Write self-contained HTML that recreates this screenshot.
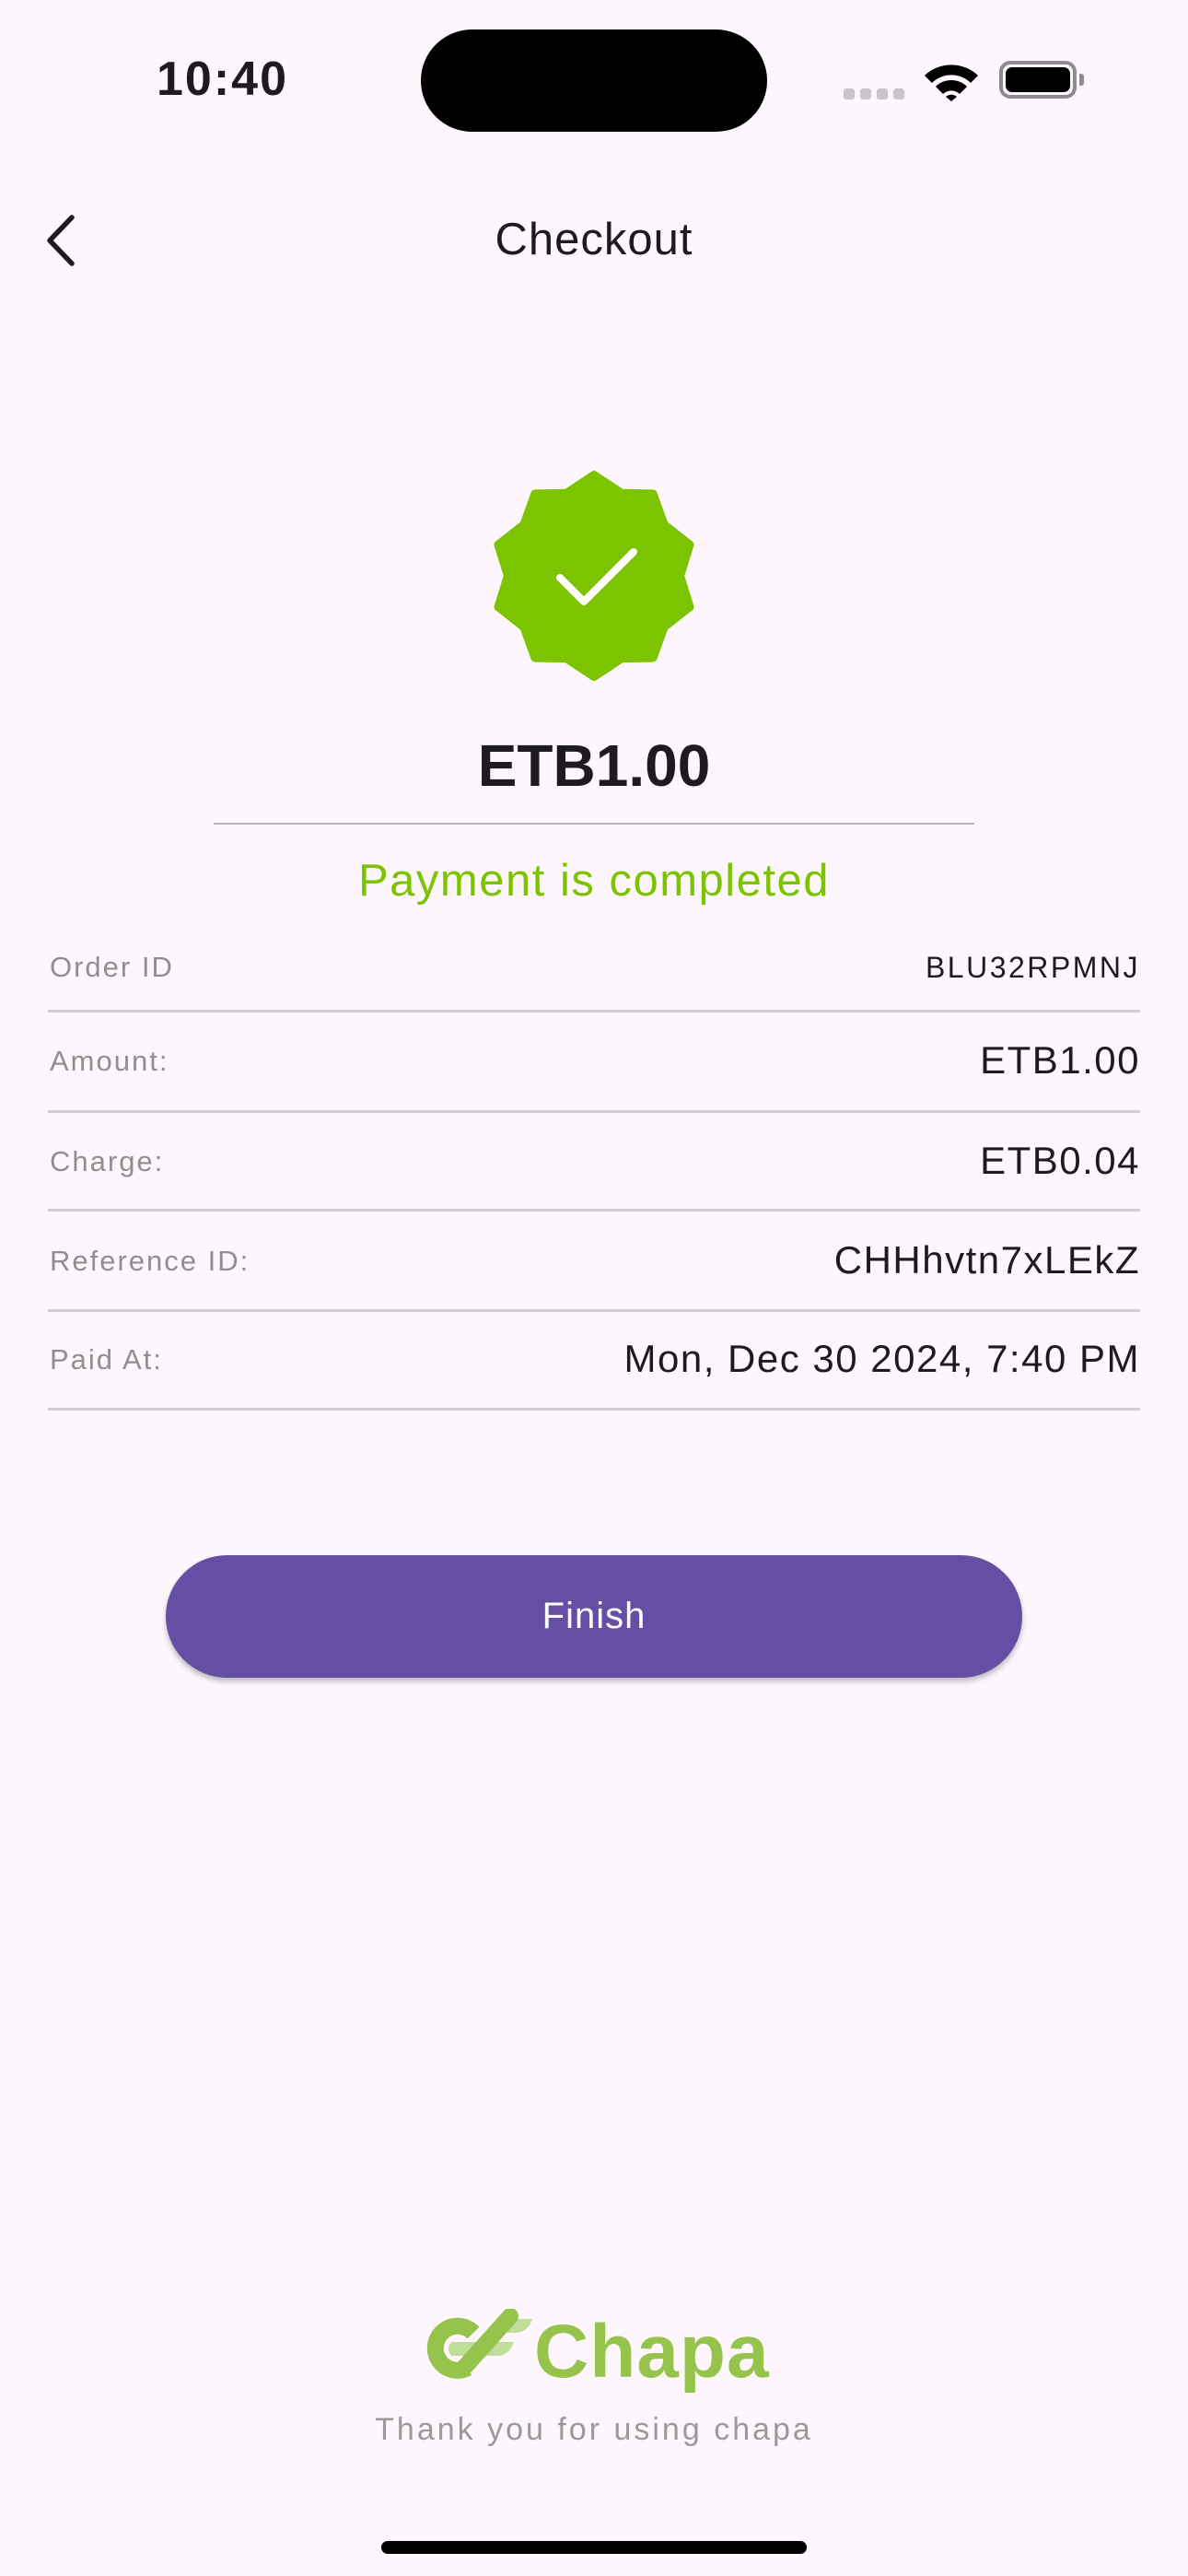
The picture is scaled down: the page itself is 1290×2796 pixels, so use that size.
<!DOCTYPE html>
<html><head><meta charset="utf-8"><style>
*{margin:0;padding:0;box-sizing:border-box}
body{width:1290px;height:2796px;background:#fdf7fd;position:relative;overflow:hidden;font-family:"Liberation Sans",sans-serif;color:#1d1b20}
.a{position:absolute}
.lbl{position:absolute;left:54px;font-size:31px;color:#8f8f8f;letter-spacing:2px}
.val{position:absolute;right:52px;font-size:42px;color:#1d1b20;letter-spacing:1.5px}
.ln{position:absolute;left:52px;width:1186px;height:3px;background:#cfcdd2}
</style></head><body>
<div class="a" style="left:170px;top:56px;font-size:52px;font-weight:bold;letter-spacing:2px">10:40</div>
<div class="a" style="left:457px;top:32px;width:376px;height:111px;border-radius:56px;background:#000"></div>
<div class="a" style="left:916px;top:96px;width:12px;height:12px;border-radius:3px;background:#c9c6ca"></div>
<div class="a" style="left:934px;top:96px;width:12px;height:12px;border-radius:3px;background:#c9c6ca"></div>
<div class="a" style="left:952px;top:96px;width:12px;height:12px;border-radius:3px;background:#c9c6ca"></div>
<div class="a" style="left:970px;top:96px;width:12px;height:12px;border-radius:3px;background:#c9c6ca"></div>
<svg class="a" style="left:1000px;top:62px" width="66" height="48" viewBox="0 0 66 48">
<path d="M4 20 A42 42 0 0 1 62 20 L54 28 A30 30 0 0 0 12 28 Z" fill="#000"/>
<path d="M16 32 A24 24 0 0 1 50 32 L42 40 A13 13 0 0 0 24 40 Z" fill="#000"/>
<path d="M27 43 A9 9 0 0 1 39 43 L33 48 Z" fill="#000"/></svg>
<div class="a" style="left:1085px;top:66px;width:84px;height:41px;border:4px solid #8e8b90;border-radius:12px"></div>
<div class="a" style="left:1092px;top:73px;width:70px;height:27px;border-radius:7px;background:#000"></div>
<div class="a" style="left:1172px;top:80px;width:5px;height:13px;border-radius:0 3px 3px 0;background:#8e8b90"></div>
<svg class="a" style="left:44px;top:230px" width="46" height="62" viewBox="0 0 46 62"><path d="M34 6 L10 31 L34 56" fill="none" stroke="#1d1b20" stroke-width="5.5" stroke-linecap="round" stroke-linejoin="round"/></svg>
<div class="a" style="left:0;width:1290px;top:232px;text-align:center;font-size:49px;letter-spacing:1px">Checkout</div>
<svg class="a" style="left:0;top:0" width="1290" height="800">
<polygon points="645,516 674.7,535.7 708.8,536.4 720.7,569.6 748.5,591.4 738,625 748.5,658.6 720.7,680.4 708.8,713.6 674.7,714.3 645,734 615.3,714.3 581.2,713.6 569.3,680.4 541.5,658.6 552,625 541.5,591.4 569.3,569.6 581.2,536.4 615.3,535.7" fill="#7dc400" stroke="#7dc400" stroke-width="10" stroke-linejoin="round"/>
<path d="M608 627 L634 653 L688 599" fill="none" stroke="#fff" stroke-width="8" stroke-linecap="round" stroke-linejoin="round"/>
</svg>
<div class="a" style="left:0;width:1290px;top:794px;text-align:center;font-size:64px;font-weight:bold">ETB1.00</div>
<div class="a" style="left:232px;top:893px;width:826px;height:2px;background:#b9b7bb"></div>
<div class="a" style="left:0;width:1290px;top:928px;text-align:center;font-size:49px;color:#7dc400;letter-spacing:1.5px">Payment is completed</div>
<div class="lbl" style="top:1032px">Order ID</div><div class="val" style="top:1032px;font-size:32px;letter-spacing:2.5px">BLU32RPMNJ</div>
<div class="ln" style="top:1096px"></div>
<div class="lbl" style="top:1134px">Amount:</div><div class="val" style="top:1127px">ETB1.00</div>
<div class="ln" style="top:1205px"></div>
<div class="lbl" style="top:1243px">Charge:</div><div class="val" style="top:1236px">ETB0.04</div>
<div class="ln" style="top:1312px"></div>
<div class="lbl" style="top:1351px">Reference ID:</div><div class="val" style="top:1344px">CHHhvtn7xLEkZ</div>
<div class="ln" style="top:1421px"></div>
<div class="lbl" style="top:1458px">Paid At:</div><div class="val" style="top:1451px">Mon, Dec 30 2024, 7:40 PM</div>
<div class="ln" style="top:1528px"></div>
<div class="a" style="left:180px;top:1688px;width:930px;height:133px;border-radius:67px;background:#654ea3;box-shadow:0 4px 6px rgba(0,0,0,.25);color:#fff;font-size:40px;text-align:center;line-height:133px;letter-spacing:1px">Finish</div>
<svg class="a" style="left:462px;top:2506px" width="130" height="84" viewBox="0 0 130 84">
<path d="M80 11 L116 11 Q112 24 100 26 L70 26 Z" fill="#c1dd9a"/>
<path d="M28 36 L96 36 Q92 49 80 51 L28 51 Q22 44 28 36 Z" fill="#c1dd9a"/>
<path d="M52 26 A24 24 0 1 0 46 64" fill="none" stroke="#95c34b" stroke-width="18"/>
<path d="M40 66 L92 8" fill="none" stroke="#95c34b" stroke-width="18" stroke-linecap="round"/>
</svg>
<div class="a" style="left:580px;top:2506px;font-size:82px;font-weight:bold;color:#95c34b;letter-spacing:1px">Chapa</div>
<div class="a" style="left:0;width:1290px;top:2618px;text-align:center;font-size:34px;color:#9a9a9a;letter-spacing:3px">Thank you for using chapa</div>
<div class="a" style="left:414px;top:2758px;width:462px;height:14px;border-radius:7px;background:#000"></div>
</body></html>
